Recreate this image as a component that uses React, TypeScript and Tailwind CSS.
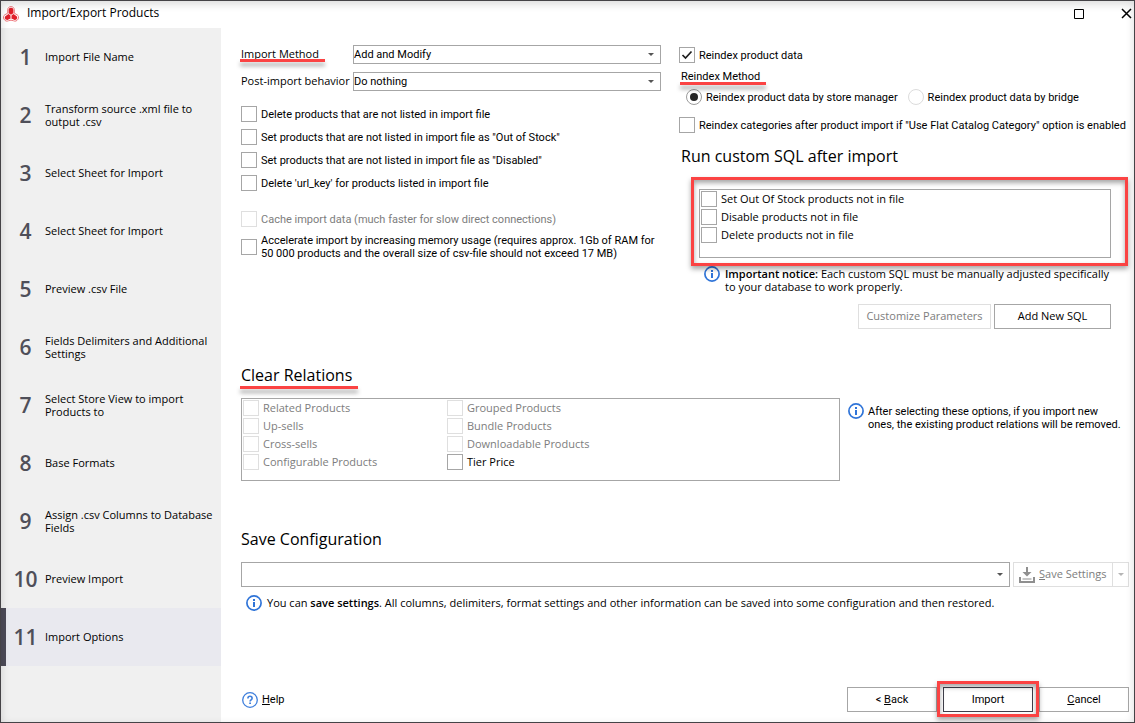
import { useState } from 'react'
import type { ReactNode } from 'react'

const steps = [
  'Import File Name',
  'Transform source .xml file to output .csv',
  'Select Sheet for Import',
  'Select Sheet for Import',
  'Preview .csv File',
  'Fields Delimiters and Additional Settings',
  'Select Store View to import Products to',
  'Base Formats',
  'Assign .csv Columns to Database Fields',
  'Preview Import',
  'Import Options',
]

const missingProductOptions = [
  'Delete products that are not listed in import file',
  'Set products that are not listed in import file as "Out of Stock"',
  'Set products that are not listed in import file as "Disabled"',
  "Delete 'url_key' for products listed in import file",
]

const sqlScripts = [
  'Set Out Of Stock products not in file',
  'Disable products not in file',
  'Delete products not in file',
]

const relations = [
  { name: 'Related Products', disabled: true },
  { name: 'Up-sells', disabled: true },
  { name: 'Cross-sells', disabled: true },
  { name: 'Configurable Products', disabled: true },
  { name: 'Grouped Products', disabled: true },
  { name: 'Bundle Products', disabled: true },
  { name: 'Downloadable Products', disabled: true },
  { name: 'Tier Price', disabled: false },
]

function Logo() {
  return (
    <svg width="16" height="16" viewBox="0 0 16 16" className="shrink-0">
      <path
        d="M8 .6c2 0 3.3 1.3 3.3 3.2v3.4l2.9 1.6c1.5.9 1.7 2.8.8 4.4-1 1.7-2.8 2.5-4.3 1.6L8 14.2l-2.7.6c-1.5.9-3.3.1-4.3-1.6-.9-1.6-.7-3.5.8-4.4l2.9-1.6V3.8C4.7 1.9 6 .6 8 .6z"
        fill="#fff"
        stroke="#ee7a7e"
        strokeWidth="1"
      />
      <g fill="#e0202b">
        <path d="M8 1.8c1.5 0 2.4.9 2.4 2.2v3.4L8 9.2 5.6 7.4V4c0-1.3.9-2.2 2.4-2.2z" />
        <path d="M5.4 7.9l2.5 1.6-.3 3-2.7 1.3c-1.1.5-2.2 0-2.8-1-.5-1-.4-2.3.6-2.9z" />
        <path d="M10.6 7.9L8.1 9.5l.3 3 2.7 1.3c1.1.5 2.2 0 2.8-1 .5-1 .4-2.3-.6-2.9z" />
      </g>
      <path d="M8 9.3v2.4M8 9.3L6.4 8M8 9.3L9.6 8" fill="none" stroke="#fff" strokeWidth="0.8" />
    </svg>
  )
}

function InfoIcon() {
  return (
    <svg width="16" height="16" viewBox="0 0 16 16" className="shrink-0">
      <circle cx="8" cy="8" r="7.1" fill="#fff" stroke="#2f74d8" strokeWidth="1.7" />
      <rect x="7" y="4" width="2" height="2" fill="#2f74d8" />
      <rect x="7" y="7" width="2" height="5" fill="#2f74d8" />
    </svg>
  )
}

function HelpIcon() {
  return (
    <svg width="16" height="16" viewBox="0 0 16 16" fill="none" stroke="#3f7fdc" className="shrink-0">
      <circle cx="8" cy="8" r="7.3" strokeWidth="1.3" />
      <path d="M5.9 6.4c0-1.3.9-2.1 2.1-2.1s2.1.8 2.1 1.9c0 1.6-2 1.6-2 3.2" strokeWidth="1.6" />
      <path d="M7.2 11.3h1.8" strokeWidth="1.6" />
    </svg>
  )
}

function SaveIcon() {
  return (
    <svg width="16" height="16" viewBox="0 0 16 16" fill="none" stroke="#8f8f8f" className="shrink-0">
      <path d="M8 0v8" strokeWidth="2" />
      <path d="M3.5 5h9L8 9.6z" fill="#8f8f8f" stroke="none" />
      <path d="M1 10V15H15V10" strokeWidth="2" />
      <path d="M3.5 12h9" strokeWidth="1" />
    </svg>
  )
}

function Arrow({ className = 'text-[#555555]' }: { className?: string }) {
  return (
    <svg width="6" height="3" viewBox="0 0 6 3" className={className}>
      <path d="M0 0h6L3 3z" fill="currentColor" />
    </svg>
  )
}

type CheckProps = {
  label: string
  disabled?: boolean
  defaultChecked?: boolean
}

function Check({ label, disabled, defaultChecked }: CheckProps) {
  return (
    <label className="flex items-center gap-1 has-disabled:text-[#7d7d7d]">
      <span className="relative size-4 shrink-0">
        <input
          type="checkbox"
          disabled={disabled}
          defaultChecked={defaultChecked}
          className="peer block size-4 appearance-none border border-[#a6a6a6] bg-white disabled:border-[#dfdfdf]"
        />
        <svg
          viewBox="0 0 16 16"
          className="pointer-events-none absolute inset-0 hidden size-4 peer-checked:block"
          fill="none"
          stroke="#1e1e1e"
          strokeWidth="1.7"
        >
          <path d="M3.5 8l3 3 6-6.5" />
        </svg>
      </span>
      {label}
    </label>
  )
}

function Select({ id, options, className }: { id: string; options: string[]; className: string }) {
  return (
    <div className="relative min-w-0 flex-1">
      <select id={id} className={`block w-full appearance-none border border-[#a6a6a6] bg-white ${className}`}>
        {options.map((option) => (
          <option key={option}>{option}</option>
        ))}
      </select>
      <span className="pointer-events-none absolute inset-y-0 right-[7px] flex items-center">
        <Arrow />
      </span>
    </div>
  )
}

// Red marker line drawn under a caption
function Marked({ children }: { children: ReactNode }) {
  return (
    <span className="relative inline-block">
      {children}
      <span className="pointer-events-none absolute -right-1.5 -bottom-0.5 -left-px h-[3px] bg-[#fb4343] shadow-[0_4px_4px_rgba(0,0,0,0.35)]" />
    </span>
  )
}

function Title({ children }: { children: ReactNode }) {
  return <h2 className="font-['Open_Sans',sans-serif] text-base leading-6">{children}</h2>
}

export default function App() {
  const [method, setMethod] = useState('manager')

  return (
    <div className="relative flex min-h-screen flex-col border border-[#454347] bg-white font-[Roboto,sans-serif] text-[11px] leading-[13px] text-black">
      <header className="flex h-[27px] items-center px-0.5 pb-0.5">
        <Logo />
        <h1 className="ml-2 pb-0.5 font-['Open_Sans',sans-serif] text-xs">Import/Export Products</h1>
        <button aria-label="Maximize" className="mr-9 ml-auto">
          <svg width="12" height="12" viewBox="0 0 12 12" fill="none" stroke="#000">
            <path d="M1.5 1.5h9v9h-9z" />
          </svg>
        </button>
        <button aria-label="Close">
          <svg width="11" height="11" viewBox="0 0 11 11" fill="none" stroke="#000" strokeWidth="1.5">
            <path d="M1 1l9 9M10 1l-9 9" />
          </svg>
        </button>
      </header>

      <div className="flex flex-1">
        <nav className="w-[220px] shrink-0 bg-[#f0f0f0] font-['Open_Sans',sans-serif]">
          <ol>
            {steps.map((step, index) => (
              <li
                key={index}
                aria-current={index === 10 ? 'step' : undefined}
                className="flex h-[58px] items-center border-l-[5px] border-transparent pr-1 aria-[current=step]:border-[#4c4a57] aria-[current=step]:bg-[#e9e9ef]"
              >
                <span className="w-[39px] shrink-0 text-center text-[21px] font-semibold text-[#4f4f59]">{index + 1}</span>
                <span className="pb-px">{step}</span>
              </li>
            ))}
          </ol>
        </nav>

        <main className="flex min-w-0 flex-1 flex-col pt-[17px] pr-[5px] pb-2.5 pl-5">
          <div className="grid grid-cols-[420fr_450fr] gap-x-[18px]">
            <section>
              <div className="flex flex-col gap-2">
                <div className="flex items-center">
                  <label htmlFor="method" className="w-28 pb-0.5 font-['Open_Sans',sans-serif] whitespace-nowrap">
                    <Marked>Import Method</Marked>
                  </label>
                  <Select id="method" options={['Add and Modify', 'Add', 'Modify']} className="h-[19px]" />
                </div>
                <div className="flex items-center">
                  <label htmlFor="behavior" className="w-28 pb-0.5 font-['Open_Sans',sans-serif] whitespace-nowrap">
                    Post-import behavior
                  </label>
                  <Select id="behavior" options={['Do nothing']} className="h-[19px]" />
                </div>
              </div>

              <div className="mt-[15px] flex flex-col gap-[7px]">
                {missingProductOptions.map((option) => (
                  <Check key={option} label={option} />
                ))}
              </div>
              <div className="mt-5 flex flex-col gap-[7px]">
                <Check label="Cache import data (much faster for slow direct connections)" disabled />
                <Check label="Accelerate import by increasing memory usage (requires approx. 1Gb of RAM for 50 000 products and the overall size of csv-file should not exceed 17 MB)" />
              </div>
            </section>

            <section className="pt-0.5">
              <Check label="Reindex product data" defaultChecked />
              <fieldset className="pt-[7px]">
                <legend className="float-left w-full pl-0.5">
                  <Marked>Reindex Method</Marked>
                </legend>
                <div className="clear-both flex gap-2.5 pt-1.5 pl-[7px]">
                  {[
                    { id: 'manager', name: 'Reindex product data by store manager' },
                    { id: 'bridge', name: 'Reindex product data by bridge' },
                  ].map((item) => (
                    <label key={item.id} className="flex items-center gap-1">
                      <input
                        type="radio"
                        name="reindex"
                        checked={method === item.id}
                        onChange={() => setMethod(item.id)}
                        className="size-4 shrink-0 appearance-none rounded-full border border-[#dcdcdc] bg-white checked:border-[#9c9c9c] checked:bg-[#262626] checked:bg-clip-content checked:p-[3px]"
                      />
                      {item.name}
                    </label>
                  ))}
                </div>
              </fieldset>
              <div className="pt-3">
                <Check label={'Reindex categories after product import if "Use Flat Catalog Category" option is enabled'} />
              </div>

              <div className="mt-[11px] pl-0.5">
                <Title>Run custom SQL after import</Title>
              </div>
              <div className="mt-[21px] pr-[18px] pl-5">
                <div className="relative h-[69px] border border-[#a6a6a6] p-px font-['Open_Sans',sans-serif] leading-[14px]">
                  <div className="flex flex-col gap-0.5">
                    {sqlScripts.map((script) => (
                      <Check key={script} label={script} />
                    ))}
                  </div>
                  <span className="pointer-events-none absolute -top-[13px] -right-[18px] -bottom-[9px] -left-[9px] border-3 border-[#fb4343] shadow-[0_3px_5px_rgba(0,0,0,0.35),inset_0_3px_5px_rgba(0,0,0,0.35)]" />
                </div>
                <div className="mt-2 -mr-2 flex gap-[5px] pl-[5px] font-['Open_Sans',sans-serif]">
                  <InfoIcon />
                  <p className="pt-px">
                    <b className="font-semibold">Important notice:</b> Each custom SQL must be manually adjusted specifically to your database to work properly.
                  </p>
                </div>
                <div className="mt-[11px] flex justify-end gap-[3px] font-['Open_Sans',sans-serif]">
                  <button disabled className="h-[25px] w-[133px] border border-[#dfdfdf] pb-0.5 text-[#7d7d7d]">
                    Customize Parameters
                  </button>
                  <button className="h-[25px] w-[117px] border border-[#a6a6a6] pb-0.5">Add New SQL</button>
                </div>
              </div>
            </section>
          </div>

          <section className="mt-[34px]">
            <Title>
              <Marked>Clear Relations</Marked>
            </Title>
            <div className="mt-[11px] flex gap-2">
              <div className="grid h-[83px] flex-1 grid-flow-col grid-cols-[204px_1fr] grid-rows-[repeat(4,16px)] gap-y-0.5 border border-[#a6a6a6] p-px font-['Open_Sans',sans-serif] leading-[14px]">
                {relations.map((item) => (
                  <Check key={item.name} label={item.name} disabled={item.disabled} />
                ))}
              </div>
              <div className="flex w-[281px] gap-1 pt-[5px] pr-1.5">
                <InfoIcon />
                <p className="pt-0.5">After selecting these options, if you import new ones, the existing product relations will be removed.</p>
              </div>
            </div>
          </section>

          <section className="mt-[46px] font-['Open_Sans',sans-serif]">
            <Title>
              <label htmlFor="configuration">Save Configuration</label>
            </Title>
            <div className="mt-[11px] flex gap-[3px]">
              <Select id="configuration" options={['']} className="h-[25px]" />
              <div className="flex h-[25px] w-[116px] border border-[#dfdfdf] text-[#7d7d7d]">
                <button disabled className="flex flex-1 items-center gap-1 pl-[5px] whitespace-nowrap">
                  <SaveIcon />
                  <span className="pb-0.5">
                    <u>S</u>ave Settings
                  </span>
                </button>
                <button disabled aria-label="More save options" className="flex w-4 items-center justify-center border-l border-[#dfdfdf]">
                  <Arrow className="text-[#b5b5b5]" />
                </button>
              </div>
            </div>
            <div className="mt-2 flex items-center gap-[5px] pl-[5px]">
              <InfoIcon />
              <p className="pb-px">
                You can <b className="font-semibold">save settings</b>. All columns, delimiters, format settings and other information can be saved into some configuration and then restored.
              </p>
            </div>
          </section>

          <footer className="mt-auto flex items-center gap-1.5">
            <a href="#help" className="mr-auto flex items-center gap-1 pl-px">
              <HelpIcon />
              <span>
                <u>H</u>elp
              </span>
            </a>
            <button className="h-[25px] w-[90px] border border-[#a6a6a6]">
              &lt; <u>B</u>ack
            </button>
            <button className="relative h-[25px] w-[90px] border border-[#3f3f4b]">
              Import
              <span className="pointer-events-none absolute -inset-x-[7px] -top-[7px] -bottom-1.5 border-3 border-[#fb4343] shadow-[0_3px_5px_rgba(0,0,0,0.35),inset_0_3px_5px_rgba(0,0,0,0.35)]" />
            </button>
            <button className="h-[25px] w-[90px] border border-[#a6a6a6]">
              <u>C</u>ancel
            </button>
          </footer>
        </main>
      </div>
      <div className="pointer-events-none absolute inset-0 shadow-[inset_0_3px_8px_rgba(0,0,0,0.15)]" />
    </div>
  )
}
